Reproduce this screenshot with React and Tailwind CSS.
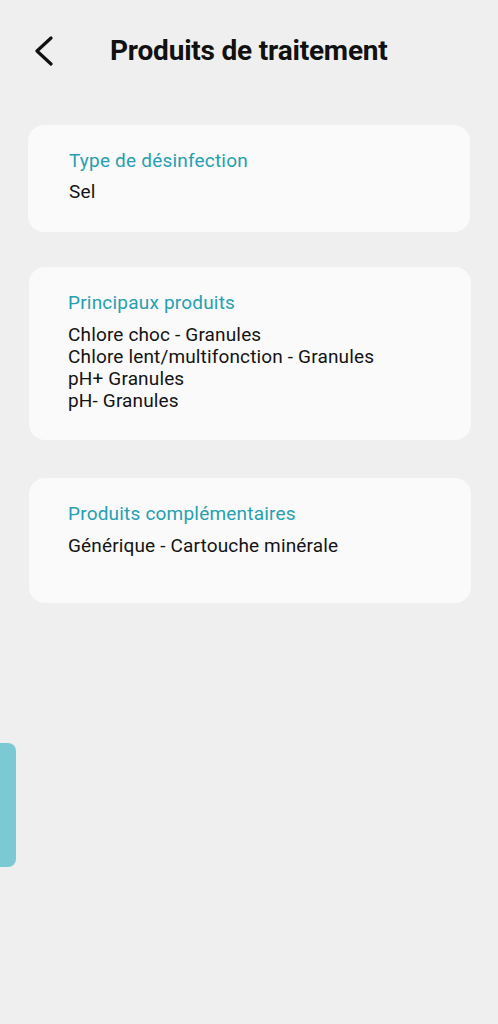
export default function App() {
  const font = { fontFamily: 'Roboto, "Noto Sans", sans-serif' };
  return (
    <div className="relative w-[498px] h-[1024px] bg-[#efefef] overflow-hidden" style={font}>
      <header className="flex items-center h-[102px]">
        <div className="w-[110px] flex items-center pl-[32px]">
          <svg width="22" height="30" viewBox="0 0 22 30" fill="none">
            <path d="M19 2 L5 15 L19 28" stroke="#111" strokeWidth="3.2" strokeLinecap="round" strokeLinejoin="round" />
          </svg>
        </div>
        <h1 className="text-[28px] font-bold text-[#111] tracking-[-0.2px]">Produits de traitement</h1>
      </header>
      <main className="flex flex-col px-[28px] pt-[23px]">
        <section className="bg-[#fafafa] rounded-[16px] pl-[41px] pr-4 pt-[24px] pb-[29px]">
          <div className="text-[19px] leading-[24px] tracking-[0.2px] text-[#26a0b0]">Type de désinfection</div>
          <div className="mt-[8px] text-[19px] leading-[22px] tracking-[0.15px] text-[#141414]">Sel</div>
        </section>
        <section className="mt-[35px] bg-[#fafafa] rounded-[16px] pl-[39px] pr-4 pt-[24px] pb-[28px] ml-[1px] -mr-[1px]">
          <div className="text-[19px] leading-[24px] tracking-[0.2px] text-[#26a0b0]">Principaux produits</div>
          <div className="mt-[9px] text-[19px] leading-[22px] tracking-[0.15px] text-[#141414]">
            <div>Chlore choc - Granules</div>
            <div>Chlore lent/multifonction - Granules</div>
            <div>pH+ Granules</div>
            <div>pH- Granules</div>
          </div>
        </section>
        <section className="mt-[38px] bg-[#fafafa] rounded-[16px] pl-[39px] pr-4 pt-[24px] pb-[46px] ml-[1px] -mr-[1px]">
          <div className="text-[19px] leading-[24px] tracking-[0.2px] text-[#26a0b0]">Produits complémentaires</div>
          <div className="mt-[9px] text-[19px] leading-[22px] tracking-[0.15px] text-[#141414]">Générique - Cartouche minérale</div>
        </section>
      </main>
      <div className="absolute left-0 top-[743px] w-[16px] h-[124px] bg-[#7bc9d2] rounded-r-[8px]" />
    </div>
  );
}
